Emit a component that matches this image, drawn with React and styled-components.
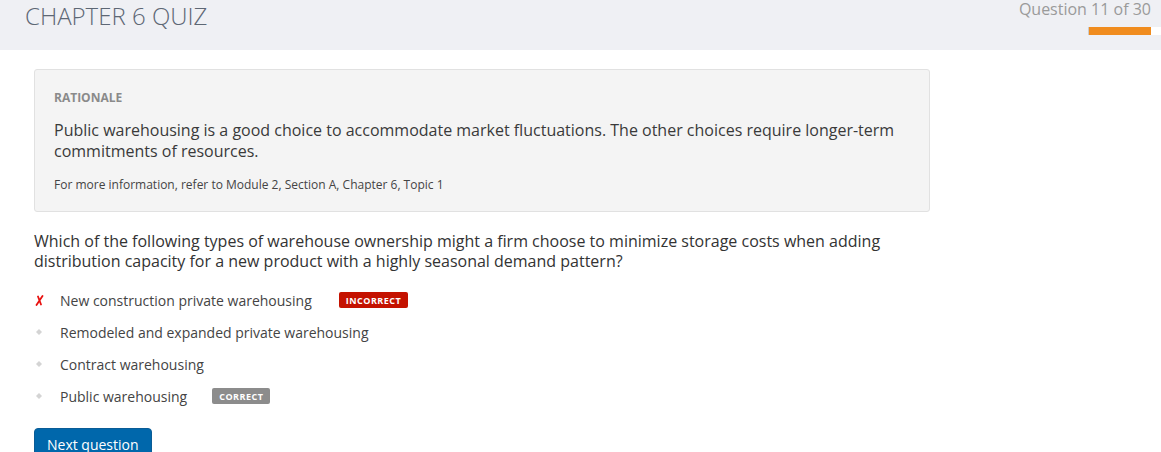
import React from 'react';
import styled, { createGlobalStyle } from 'styled-components';

const GlobalStyle = createGlobalStyle`
  body {
    margin: 0;
    background: #ffffff;
    font-family: "Open Sans", "Liberation Sans", sans-serif;
    color: #333;
  }
`;

const Header = styled.header`
  height: 50px;
  background: #eff0f4;
  display: flex;
  justify-content: space-between;
  align-items: flex-start;
  padding: 0 10px 0 25px;
  box-sizing: border-box;
`;

const Title = styled.h1`
  margin: 0;
  font-weight: 300;
  font-size: 24px;
  line-height: 32px;
  color: #5d6774;
`;

const Progress = styled.div`
  display: flex;
  flex-direction: column;
  align-items: flex-end;
  margin-right: -10px;
`;

const Counter = styled.div`
  font-size: 16px;
  line-height: 18px;
  color: #9a9a9a;
  margin-right: 10px;
`;

const Track = styled.div`
  margin-top: 9px;
  width: 72px;
  height: 8px;
  background: #fff;
  border-left: 1px solid #ccc;
  display: flex;
`;

const Fill = styled.div`
  height: 100%;
  background: #f08c1e;
`;

const Main = styled.main`
  padding: 19px 34px 0;
  width: 896px;
`;

const Card = styled.section`
  background: #f4f4f4;
  border: 1px solid #e1e1e1;
  border-radius: 3px;
  padding: 20px 19px 18px;
`;

const Label = styled.div`
  font-size: 12px;
  font-weight: 700;
  color: #8a8a8a;
  line-height: 16px;
`;

const Rationale = styled.p`
  margin: 14px 0 0;
  font-size: 16px;
  line-height: 21px;
  color: #3a3a3a;
`;

const Reference = styled.p`
  margin: 15px 0 0;
  font-size: 12px;
  line-height: 16px;
  color: #444;
`;

const Question = styled.p`
  margin: 19px 0 0;
  font-size: 16px;
  line-height: 20px;
  color: #333;
`;

const Options = styled.ul`
  list-style: none;
  margin: 13px 0 0;
  padding: 0;
`;

const Option = styled.li`
  display: flex;
  align-items: center;
  height: 32px;
  font-size: 14px;
  color: #444;
`;

const Marker = styled.span`
  width: 26px;
  display: flex;
  justify-content: center;
  margin-left: -8px;
  margin-right: 8px;
`;

const Badge = styled.span`
  margin-left: ${p => p.$gap}px;
  padding: 0 7px;
  height: 16px;
  display: inline-flex;
  align-items: center;
  border-radius: 2px;
  background: ${p => (p.$correct ? '#8c8c8c' : '#c41200')};
  color: #fff;
  font-size: 9px;
  font-weight: 700;
  letter-spacing: 0.5px;
`;

const Button = styled.button`
  margin-top: 16px;
  background: #0067ab;
  color: #fff;
  border: 1px solid #0a5c96;
  border-radius: 4px;
  font-family: inherit;
  font-size: 14px;
  padding: 5px 12px;
  line-height: 22px;
`;

const Cross = () => (
  <svg width="9" height="11" viewBox="0 0 9 11">
    <path d="M3 1.5 L6 9.5 M7.5 1 L1.5 10" stroke="#e8110f" strokeWidth="1.8" strokeLinecap="round" fill="none" />
  </svg>
);

const Dot = () => (
  <svg width="6" height="6" viewBox="0 0 6 6">
    <path d="M3 0 L6 3 L3 6 L0 3 Z" fill="#d4d4d4" />
  </svg>
);

const options = [
  { text: 'New construction private warehousing', wrong: true },
  { text: 'Remodeled and expanded private warehousing' },
  { text: 'Contract warehousing' },
  { text: 'Public warehousing', correct: true },
];

export default function App() {
  return (
    <>
      <GlobalStyle />
      <Header>
        <Title>CHAPTER 6 QUIZ</Title>
        <Progress>
          <Counter>Question 11 of 30</Counter>
          <Track>
            <Fill style={{ width: `${(11 / 30) * 100 * 2.35}%` }} />
          </Track>
        </Progress>
      </Header>
      <Main>
        <Card>
          <Label>RATIONALE</Label>
          <Rationale>
            Public warehousing is a good choice to accommodate market fluctuations. The other choices require longer-term commitments of resources.
          </Rationale>
          <Reference>For more information, refer to Module 2, Section A, Chapter 6, Topic 1</Reference>
        </Card>
        <Question>
          Which of the following types of warehouse ownership might a firm choose to minimize storage costs when adding distribution capacity for a new product with a highly seasonal demand pattern?
        </Question>
        <Options>
          {options.map(o => (
            <Option key={o.text}>
              <Marker>{o.wrong ? <Cross /> : <Dot />}</Marker>
              {o.text}
              {o.wrong && <Badge $gap={27}>INCORRECT</Badge>}
              {o.correct && <Badge $gap={25} $correct>CORRECT</Badge>}
            </Option>
          ))}
        </Options>
        <Button>Next question</Button>
      </Main>
    </>
  );
}
